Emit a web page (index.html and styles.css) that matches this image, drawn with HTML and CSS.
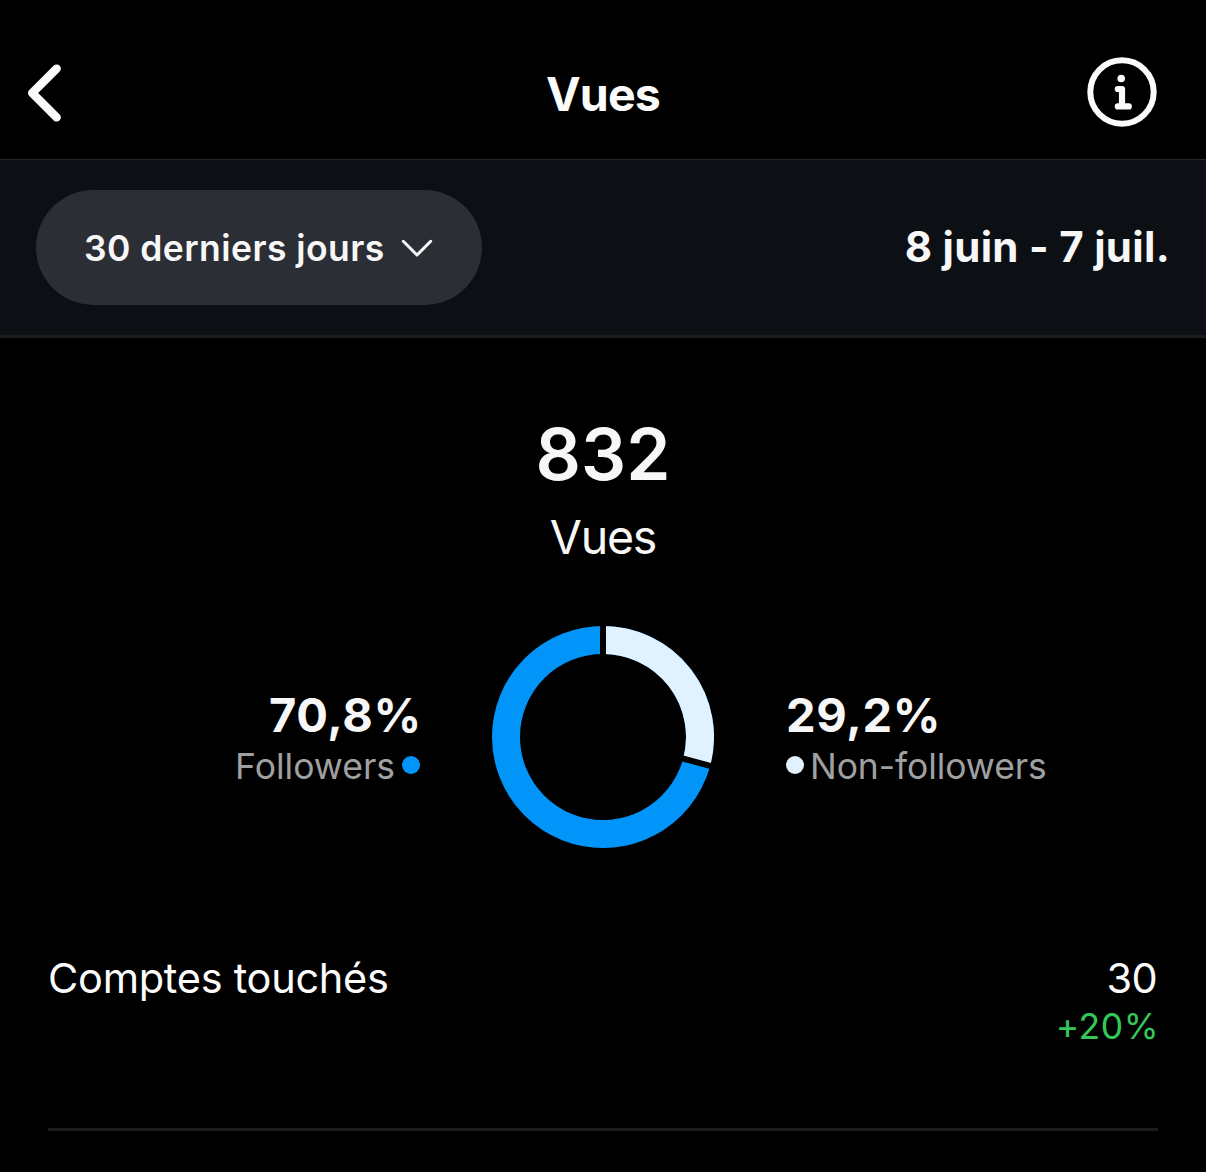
FILE: index.html
```html
<!DOCTYPE html>
<html lang="fr">
<head>
<meta charset="utf-8">
<title>Vues</title>
<link rel="stylesheet" href="styles.css">
</head>
<body>
<header class="header">
  <button class="icon-button" aria-label="Retour">
    <svg width="42" height="66" viewBox="0 0 42 66" fill="none" stroke="currentColor" stroke-width="8.4" stroke-linecap="round" stroke-linejoin="round"><path d="M32.7 8.6 8.2 33l24.5 24.4"/></svg>
  </button>
  <h1 class="title">Vues</h1>
  <button class="icon-button" aria-label="Informations">
    <svg width="70" height="70" viewBox="0 0 70 70" fill="none" stroke="currentColor" stroke-linecap="round" stroke-linejoin="round"><circle cx="35" cy="35" r="31.7" stroke-width="6"/><circle cx="34.2" cy="21.5" r="3.8" fill="currentColor" stroke="none"/><path d="M30.8 32h4.2v17.4M30.8 49.4h11" stroke-width="6.2"/></svg>
  </button>
</header>
<section class="filters">
  <button class="range">
    <span>30 derniers jours</span>
    <svg width="32" height="20" viewBox="0 0 32 20" fill="none" stroke="currentColor" stroke-width="3" stroke-linecap="round" stroke-linejoin="round"><path d="M2.3 2.3 16 16 29.7 2.3"/></svg>
  </button>
  <span class="dates">8 juin - 7 juil.</span>
</section>
<main class="insights">
  <div class="total">832</div>
  <div class="total-label">Vues</div>
  <div class="breakdown">
    <div class="share share-left">
      <div class="percent percent-left">70,8%</div>
      <div class="legend legend-left"><span>Followers</span><i class="dot dot-followers"></i></div>
    </div>
    <svg class="donut" width="222" height="222" viewBox="-111 -111 222 222" fill="none">
      <circle r="97" stroke="#0295f9" stroke-width="28"/>
      <path d="M0-97A97 97 0 0 1 93.65 25.27" stroke="#e0f1ff" stroke-width="28"/>
      <path d="M0-70V-113M67.6 18.24 109.1 29.44" stroke="#000" stroke-width="6"/>
    </svg>
    <div class="share">
      <div class="percent percent-right">29,2%</div>
      <div class="legend legend-right"><i class="dot dot-others"></i><span>Non-followers</span></div>
    </div>
  </div>
  <div class="metric">
    <span class="metric-text">Comptes touchés</span>
    <div class="metric-result">
      <div class="metric-value">30</div>
      <div class="metric-change">+20%</div>
    </div>
  </div>
</main>
</body>
</html>
```
FILE: styles.css
```css
* { box-sizing: border-box; }

body {
  margin: 0;
  background: #000;
  color: #f7f7f7;
  font-family: Inter, "Liberation Sans", sans-serif;
}

button {
  padding: 0;
  border: 0;
  background: none;
  color: inherit;
  font: inherit;
}

svg { display: block; }

.header {
  display: grid;
  grid-template-columns: 1fr auto 1fr;
  align-items: center;
  height: 160px;
  padding: 26px 49px 0 24px;
  border-bottom: 1px solid #262626;
  color: #fbfbfb;
}

.icon-button { justify-self: start; }
.icon-button:last-child { justify-self: end; margin-bottom: 2px; }

.title {
  margin: 3px 0 0 25px;
  font-size: 46.5px;
  font-weight: 700;
  line-height: 56px;
  letter-spacing: -0.8px;
}

.filters {
  display: flex;
  align-items: center;
  justify-content: space-between;
  height: 178px;
  padding: 0 36px;
  border-bottom: 3px solid #1b1c1f;
  background: #0c0f14;
}

.range {
  display: flex;
  align-items: center;
  gap: 16px;
  width: 446px;
  height: 115px;
  padding: 2px 0 0 48px;
  border-radius: 58px;
  background: #2b2e35;
  font-size: 35.5px;
  font-weight: 600;
  letter-spacing: 0.43px;
}

.dates {
  margin-bottom: 2px;
  font-size: 42px;
  font-weight: 700;
  letter-spacing: 0.3px;
}

.insights {
  padding: 73px 48px 0;
  text-align: center;
}

.total {
  font-size: 71px;
  font-weight: 600;
  line-height: 86px;
}

.total-label {
  margin-top: 12px;
  font-size: 46.5px;
  line-height: 56px;
  letter-spacing: -1.2px;
}

.breakdown {
  display: grid;
  grid-template-columns: 1fr 222px 1fr;
  align-items: center;
  column-gap: 72px;
  margin-top: 61px;
  text-align: left;
}

.share-left { text-align: right; }

.percent {
  font-size: 47px;
  font-weight: 700;
  line-height: 56px;
  letter-spacing: 0.7px;
}

.percent-left { margin-right: -2px; }

.legend {
  display: flex;
  align-items: center;
  height: 44px;
  padding-top: 3px;
  color: #a0a0a0;
  font-size: 35.5px;
  line-height: 44px;
}

.legend-left {
  justify-content: flex-end;
  gap: 7px;
}

.legend-right {
  gap: 6px;
  letter-spacing: -0.08px;
}

.dot {
  width: 18px;
  height: 18px;
  margin-bottom: 3px;
  border-radius: 50%;
}

.dot-followers { background: #0295f9; }
.dot-others { background: #e0f1ff; }

.metric {
  display: flex;
  justify-content: space-between;
  height: 178px;
  margin-top: 105px;
  border-bottom: 3px solid #1c1c1c;
  color: #fcfcfc;
  font-size: 41.5px;
  line-height: 50px;
}

.metric-text { letter-spacing: -0.28px; }

.metric-result { text-align: right; }

.metric-value {
  margin-right: 1px;
  letter-spacing: -0.6px;
}

.metric-change {
  margin: 2px -1px 0 0;
  color: #34c759;
  font-size: 35.5px;
  line-height: 44px;
  letter-spacing: 0.5px;
}
```
